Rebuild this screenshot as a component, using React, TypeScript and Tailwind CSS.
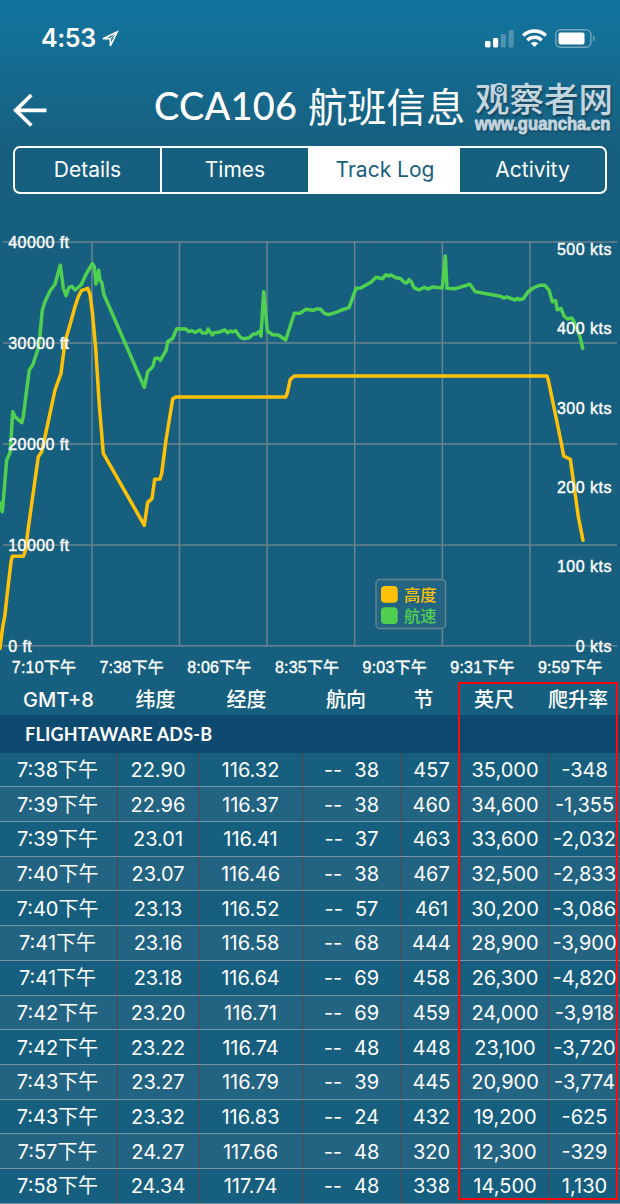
import React from "react";

const SPEED =
  "0,503 2.3,511.7 6.7,460 10,452.7 11,440 12.7,411.7 15,416.7 21.7,422.7 23.3,416.7 26,395 29.3,370 32.7,365 37.7,350 40,335 42.3,310 45,301.7 50,291 55,284.3 60.3,265.3 63.3,288.3 66,295.7 69,287.3 72,286.3 75,290 81,285 85.7,275 92.3,263.7 94.3,266.7 96,284 98.7,270.3 100,280 102,283.3 103.7,294 144.3,387.3 147.7,371.7 152.7,366.7 155,358.3 158.3,358.3 160.3,360.3 166,350.7 167.7,341.7 172.7,338.3 176.7,328.7 186,329 188.7,331.7 191.7,330.7 195,332.3 200,330 202.3,333 206.5,333 208,329 212.3,335 214.3,332.7 218.3,332.3 225,330 227.7,332.7 230.7,331 232.7,332 235.7,330.7 240,337 243.3,338.7 249.3,337.7 253.3,334 256,334 259.3,331.3 261,336 263.7,291.7 267.3,331 272.7,334.7 278.3,335 285.7,340 294.3,313.3 300,313.3 306,309.3 313.3,310.3 316,309 320.3,309 324.3,313.3 328.3,314.7 336,312.3 341.7,310 349,307.7 356,288.3 360.7,288 371,282.3 376,277.3 382.3,278.7 386,274.7 388.3,276 391,275 396,277.7 400,278.3 405,282.7 407,282.7 409,279.7 411.3,281.7 414,287.7 419,290 424.3,287.3 428.3,289 432.3,287 442.3,288 445.3,256 447,288.3 455,288.7 470,284.3 475.3,291.7 500.7,296.3 503.7,298 506.7,297 515,300 517.3,298.3 519.3,299.7 523.3,298.7 528,291.7 533.3,288 539.3,285.3 544.7,285.3 549,290 552.3,301.7 555.7,300.7 557.3,310 561,308.3 564,316 567.7,319 571.7,318 574,321.7 580,336.7 582.7,348.3";

const ALTITUDE =
  "0,648.3 2.7,626.7 4.7,616.7 7.3,593.3 11,561.7 12.3,556.3 23.3,556.3 25.7,550 28,530 38.3,456.7 41.7,451.7 44.3,440 55,390 61,373.3 65,341.7 70.7,322.3 75,306.7 78.3,296.7 81.3,290.7 87.7,288.3 90,294 92.3,311.7 95.7,348.3 99.3,405 103.3,453.3 144.3,525.3 147.7,502.3 152,498.7 154.7,479.3 160,479 161.7,473.3 166,440 172.7,399 175.7,397 285.7,397 287.3,393 290.3,379.3 294.3,376 547,376 548.3,380 560.7,440 563.7,456 570.3,459.3 572.3,473.3 578.3,516.7 583,540.3";

const ROWS: string[][] = [
  ["7:38", "22.90", "116.32", "38", "457", "35,000", "-348"],
  ["7:39", "22.96", "116.37", "38", "460", "34,600", "-1,355"],
  ["7:39", "23.01", "116.41", "37", "463", "33,600", "-2,032"],
  ["7:40", "23.07", "116.46", "38", "467", "32,500", "-2,833"],
  ["7:40", "23.13", "116.52", "57", "461", "30,200", "-3,086"],
  ["7:41", "23.16", "116.58", "68", "444", "28,900", "-3,900"],
  ["7:41", "23.18", "116.64", "69", "458", "26,300", "-4,820"],
  ["7:42", "23.20", "116.71", "69", "459", "24,000", "-3,918"],
  ["7:42", "23.22", "116.74", "48", "448", "23,100", "-3,720"],
  ["7:43", "23.27", "116.79", "39", "445", "20,900", "-3,774"],
  ["7:43", "23.32", "116.83", "24", "432", "19,200", "-625"],
  ["7:57", "24.27", "117.66", "48", "320", "12,300", "-329"],
  ["7:58", "24.34", "117.74", "48", "338", "14,500", "1,130"],
];

const COLS = "grid grid-cols-[118px_81px_104px_99px_60px_87px_71px]";
const CELL = "flex items-center justify-center border-r border-[#5a4044] pt-[1px] whitespace-nowrap";

function StatusBar() {
  return (
    <div className="flex h-[76px] items-center pl-[41px] pr-[24px]">
      <span className="w-[55px] pt-px font-['Inter','Noto_Sans',sans-serif] text-[25px] font-semibold leading-none tracking-[-0.4px]">4:53</span>
      <svg className="ml-[5px] mt-[2px]" width="18" height="18" viewBox="0 0 18 18" fill="none" stroke="white" strokeWidth="1.7" strokeLinejoin="miter">
        <path d="M2 8.7 16 2 9.3 16V8.7Z" />
        <path d="M9.3 8.7 15.4 2.5" strokeWidth="1" />
      </svg>
      <div className="ml-auto flex items-center gap-[8px]">
        <svg width="29" height="19" viewBox="0 0 29 19" fill="white">
          <rect x="0" y="12" width="5.5" height="6.5" rx="1.4" />
          <rect x="8" y="9" width="5.2" height="9.5" rx="1.4" />
          <rect x="15.7" y="5" width="5.2" height="13.5" rx="1.4" opacity=".25" />
          <rect x="23.5" y="1" width="5.2" height="17.5" rx="1.4" opacity=".25" />
        </svg>
        <svg width="25" height="18" viewBox="0 0 25 18" fill="none" stroke="white" strokeWidth="3.4">
          <path d="M1.2 6.6a16.2 16.2 0 0 1 22.6 0" />
          <path d="M5.3 11.2a10.3 10.3 0 0 1 14.4 0" />
          <path d="M12.5 18 8.7 14.2a5.4 5.4 0 0 1 7.6 0Z" fill="white" stroke="none" />
        </svg>
        <svg width="41" height="19" viewBox="0 0 41 19">
          <rect x=".8" y=".8" width="35" height="17.4" rx="4.6" fill="none" stroke="#75a5bb" strokeWidth="1.4" />
          <rect x="3.5" y="3.5" width="26" height="12" rx="2" fill="white" />
          <path d="M38 6Q41.5 9.5 38 13Z" fill="#75a5bb" />
        </svg>
      </div>
    </div>
  );
}

function Header() {
  return (
    <div className="flex h-[70px] items-start">
      <svg className="ml-[11px] mt-[16px] shrink-0" width="36" height="36" viewBox="0 0 36 36" fill="none" stroke="white" strokeWidth="3.8">
        <path d="M3.5 18.3H35.5M20.3 3 4.8 18.3 20.3 33.5" />
      </svg>
      <h1 className="ml-[107px] flex h-[58px] w-[321px] shrink-0 items-center whitespace-nowrap">
        <span className="w-[154px] font-['Lato',sans-serif] text-[38px] font-medium leading-none tracking-[0.2px]">CCA106</span>
        <span className="font-['Noto_Sans_CJK_SC',sans-serif] text-[39.3px] font-normal leading-none">航班信息</span>
      </h1>
      <div className="relative mt-[2px] text-[#c3d5df] [text-shadow:1px_2px_2px_#173f55]">
        <div className="h-[38px] whitespace-nowrap font-['Noto_Sans_CJK_SC',sans-serif] text-[34.5px] font-medium leading-[38px]">观察者网</div>
        <div className="w-[152px] origin-left scale-x-[0.9] whitespace-nowrap font-['Liberation_Sans',sans-serif] text-[18.5px] font-bold leading-[16px] [-webkit-text-stroke:0.9px_#c3d5df]">www.guancha.cn</div>
        <svg className="absolute left-[17px] top-[4px]" width="15" height="15" viewBox="0 0 15 15">
          <circle cx="7.5" cy="7.5" r="5.7" fill="#1d6482" stroke="#c3d5df" strokeWidth="2" />
          <circle cx="7.5" cy="7.5" r="2" fill="none" stroke="#c3d5df" strokeWidth="1.5" />
        </svg>
      </div>
    </div>
  );
}

function Tabs() {
  const tab = "flex items-center justify-center border-r-2 border-white";
  return (
    <div className="mx-[13px] grid h-[48px] w-[594px] shrink-0 grid-cols-[147px_148px_150px_1fr] overflow-hidden rounded-[7px] border-2 border-white font-['Inter',sans-serif] text-[21px] tracking-[0px]">
      <div className={tab}>Details</div>
      <div className={tab}>Times</div>
      <div className="flex items-center justify-center bg-white text-[#175f7e]">Track Log</div>
      <div className="flex items-center justify-center">Activity</div>
    </div>
  );
}

function Chart() {
  const times = ["7:10", "7:38", "8:06", "8:35", "9:03", "9:31", "9:59"];
  return (
    <svg className="block shrink-0" width="620" height="488" viewBox="0 194 620 488">
      <g stroke="#6b8491" strokeWidth="1.5">
        {[242, 343, 444, 545, 645.8].map((y) => <line key={y} x1="3" x2="617" y1={y} y2={y} />)}
        {[92, 179.5, 267, 354.7, 442.4, 530].map((x) => <line key={x} x1={x} x2={x} y1="242" y2="646" />)}
      </g>
      <g fill="none" strokeWidth="3.5" strokeLinejoin="round" strokeLinecap="round">
        <polyline points={SPEED} stroke="#50d050" />
        <polyline points={ALTITUDE} stroke="#ffc107" />
      </g>
      <rect x="376" y="579.5" width="69.5" height="49" rx="4" fill="#246483" stroke="#6b8491" strokeWidth="1.4" />
      <rect x="381" y="586" width="16.7" height="16.7" rx="4" fill="#ffc107" />
      <rect x="381" y="607.3" width="16.7" height="16.7" rx="4" fill="#50d050" />
      <g className="font-['Noto_Sans_CJK_SC',sans-serif] text-[16.3px] font-medium">
        <text x="404" y="600.5" fill="#ffc107">高度</text>
        <text x="404" y="622" fill="#50d050">航速</text>
      </g>
      <g className="font-['Liberation_Sans','Noto_Sans_CJK_SC',sans-serif] text-[16px]" fill="white" stroke="white" strokeWidth=".4">
        {[40000, 30000, 20000, 10000, 0].map((v, i) => (
          <text key={v} x="8.3" y={248 + i * 100.9} letterSpacing=".4">{v} ft</text>
        ))}
        {[500, 400, 300, 200, 100, 0].map((v, i) => (
          <text key={v} x="612" y={255 + i * 79.35} textAnchor="end" letterSpacing=".5">{v} kts</text>
        ))}
        {times.map((t, i) => (
          <text key={t} x={44 + i * 87.7} y="673" textAnchor="middle" letterSpacing=".2">{t}下午</text>
        ))}
      </g>
    </svg>
  );
}

function TrackTable() {
  const headings: [string, string][] = [
    ["GMT+8", "w-[117px]"],
    ["纬度", "w-[77px]"],
    ["经度", "w-[105px]"],
    ["航向", "w-[94px]"],
    ["节", "w-[61px]"],
    ["英尺", "w-[80px]"],
    ["爬升率", "w-[88px]"],
  ];
  return (
    <div className="relative">
      <div className="flex h-[33px] items-center pt-[2px] font-['Inter','Noto_Sans_CJK_SC',sans-serif] text-[20px] font-medium">
        {headings.map(([h, w]) => (
          <div key={h} className={`flex shrink-0 justify-center whitespace-nowrap ${w}`}>{h}</div>
        ))}
      </div>
      <div className="flex h-[37.5px] items-center bg-[#0e4a70] pl-[25px] pt-px font-['Lato',sans-serif] text-[18px] font-bold tracking-[0.2px]">
        FLIGHTAWARE ADS-B
      </div>
      <div className="font-['Inter','Noto_Sans_CJK_SC',sans-serif] text-[20px] leading-none">
        {ROWS.map((r, i) => (
          <div key={i} className={`${COLS} h-[34.72px] border-b-[1.5px] border-[#7594a5] ${i % 2 ? "bg-[#246483]" : "bg-[#175f7e]"}`}>
            <div className={`${CELL} pr-[2px]`}>{r[0]}下午</div>
            <div className={CELL}>{r[1]}</div>
            <div className={CELL}>{r[2]}</div>
            <div className={`${CELL} gap-[12px] pr-px`}><span>--</span><span>{r[3]}</span></div>
            <div className={CELL}>{r[4]}</div>
            <div className={CELL}>{r[5]}</div>
            <div className="flex items-center justify-center whitespace-nowrap pt-[1px]">{r[6]}</div>
          </div>
        ))}
      </div>
      <div className="absolute left-[458px] top-0 h-[518px] w-[160px] border-2 border-[#f60a0e]" />
    </div>
  );
}

export default function App() {
  return (
    <div className="flex h-[1204px] w-[620px] flex-col overflow-hidden bg-[#175f7e] bg-[linear-gradient(#12759f_0px,#175f7e_150px)] text-white">
      <StatusBar />
      <Header />
      <Tabs />
      <Chart />
      <TrackTable />
    </div>
  );
}
